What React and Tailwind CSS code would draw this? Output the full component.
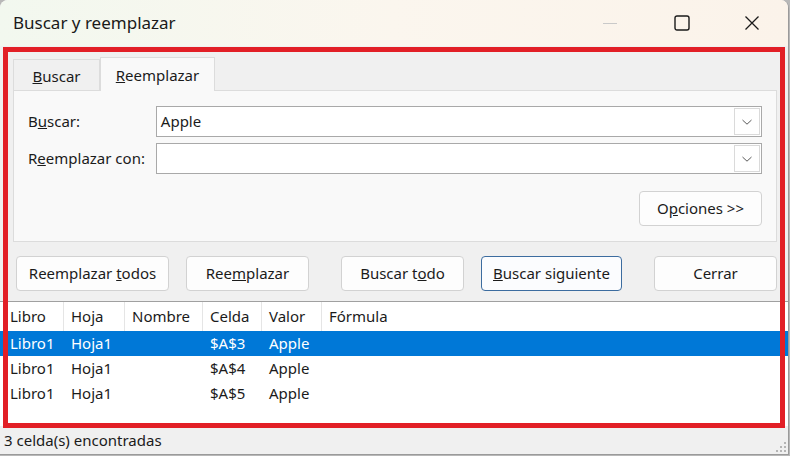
import React from "react";

/* ===========================================================
   BUSCAR Y REEMPLAZAR DIALOG
=========================================================== */
const rows = [
  { libro: "Libro1", hoja: "Hoja1", nombre: "", celda: "$A$3", valor: "Apple", selected: true },
  { libro: "Libro1", hoja: "Hoja1", nombre: "", celda: "$A$4", valor: "Apple" },
  { libro: "Libro1", hoja: "Hoja1", nombre: "", celda: "$A$5", valor: "Apple" },
];

export default function App() {
  return (
    <div
      className="w-[790px] h-[456px] bg-[#b8b8b8] text-[15px] text-[#1b1b1b] overflow-hidden"
      style={{ fontFamily: '"Segoe UI", "Noto Sans", sans-serif' }}
    >
      <div className="relative w-[789px] h-[455px] flex flex-col rounded-t-[8px] border-r border-b border-[#9a9a9a] overflow-hidden bg-[#f0f0f0]">

        {/* ---------------- Title bar ---------------- */}
        <div className="h-[46px] flex items-center bg-gradient-to-r from-[#f2f8ef] via-[#fbf6ee] to-[#fbf3ea]">
          <span className="pl-[13px] text-[17px] text-[#1a1a1a]">Buscar y reemplazar</span>
          <div className="ml-auto flex items-center h-full">
            <div className="w-[46px] flex justify-center">
              <div className="w-[14px] h-px bg-[#c9c9c9]" />
            </div>
            <div className="w-[70px] flex justify-center ml-[14px]">
              <svg width="16" height="16" viewBox="0 0 16 16">
                <rect x="1" y="1" width="14" height="14" rx="2" fill="none" stroke="#1a1a1a" strokeWidth="1.4" />
              </svg>
            </div>
            <div className="w-[70px] flex justify-center mr-[1px]">
              <svg width="16" height="16" viewBox="0 0 16 16">
                <path d="M1.5 1.5 L14.5 14.5 M14.5 1.5 L1.5 14.5" stroke="#1a1a1a" strokeWidth="1.3" />
              </svg>
            </div>
          </div>
        </div>

        {/* ---------------- Tabs ---------------- */}
        <div className="flex items-end pl-[13px] pt-[11px]">
          <div className="w-[87px] h-[31px] flex items-center justify-center border border-b-0 border-[#dcdcdc] bg-[#f0f0f0]">
            <span className="pt-[2px]"><u>B</u>uscar</span>
          </div>
          <div className="w-[115px] h-[34px] -mb-px relative z-10 flex items-center justify-center border border-b-0 border-[#dcdcdc] bg-[#f9f9f9]">
            <span className="pt-[2px]"><u>R</u>eemplazar</span>
          </div>
        </div>

        {/* ---------------- Panel ---------------- */}
        <div className="mx-[13px] w-[764px] h-[152px] border border-[#dcdcdc] bg-[#f9f9f9] pt-[15px] pl-[14px] pr-[14px] flex flex-col">
          <FieldRow label={<>B<u>u</u>scar:</>} value="Apple" />
          <div className="h-[6px]" />
          <FieldRow label={<>R<u>e</u>emplazar con:</>} value="" />
          <div className="flex justify-end mt-[17px]">
            <DialogButton className="w-[123px]">
              O<u>p</u>ciones &gt;&gt;
            </DialogButton>
          </div>
        </div>

        {/* ---------------- Buttons ---------------- */}
        <div className="flex items-center pl-[16px] mt-[14px]">
          <DialogButton className="w-[153px]">Reemplazar <u>t</u>odos</DialogButton>
          <DialogButton className="w-[123px] ml-[17px]">Ree<u>m</u>plazar</DialogButton>
          <DialogButton className="w-[123px] ml-[32px]">Buscar t<u>o</u>do</DialogButton>
          <DialogButton className="w-[141px] ml-[17px]" primary>
            <u>B</u>uscar siguiente
          </DialogButton>
          <DialogButton className="w-[123px] ml-[32px]">Cerrar</DialogButton>
        </div>

        {/* ---------------- Results list ---------------- */}
        <div className="mt-[10px] flex-1 bg-white border-t border-[#a0a0a0] flex flex-col">
          <div className="flex h-[29px] items-center">
            <HeadCell w="w-[64px]" first>Libro</HeadCell>
            <HeadCell w="w-[61px]">Hoja</HeadCell>
            <HeadCell w="w-[78px]">Nombre</HeadCell>
            <HeadCell w="w-[59px]">Celda</HeadCell>
            <HeadCell w="w-[60px]">Valor</HeadCell>
            <HeadCell w="w-[200px]" last>Fórmula</HeadCell>
          </div>
          {rows.map((r, i) => (
            <div
              key={i}
              className={
                r.selected
                  ? "flex h-[25px] items-center bg-[#0078d7] text-white"
                  : "flex h-[25px] items-center"
              }
            >
              <Cell w="w-[64px]" first>{r.libro}</Cell>
              <Cell w="w-[61px]">{r.hoja}</Cell>
              <Cell w="w-[78px]">{r.nombre}</Cell>
              <Cell w="w-[59px]">{r.celda}</Cell>
              <Cell w="w-[60px]">{r.valor}</Cell>
              <Cell w="flex-1"></Cell>
            </div>
          ))}
        </div>

        {/* ---------------- Status bar ---------------- */}
        <div className="h-[28px] flex items-center pl-[4px] bg-[#f0f0f0] relative">
          <span>3 celda(s) encontradas</span>
          <svg className="absolute right-[1px] bottom-[1px]" width="12" height="12" viewBox="0 0 12 12">
            <rect x="9" y="1" width="2" height="2" fill="#b5b5b5" />
            <rect x="5" y="5" width="2" height="2" fill="#b5b5b5" />
            <rect x="9" y="5" width="2" height="2" fill="#b5b5b5" />
            <rect x="1" y="9" width="2" height="2" fill="#b5b5b5" />
            <rect x="5" y="9" width="2" height="2" fill="#b5b5b5" />
            <rect x="9" y="9" width="2" height="2" fill="#b5b5b5" />
          </svg>
        </div>

        {/* ---------------- Red annotation frame ---------------- */}
        <div className="absolute left-[3px] top-[47px] w-[782px] h-[381px] border-[5px] border-[#e21f26] pointer-events-none" />
      </div>
    </div>
  );
}

/* ===========================================================
   REUSABLE COMPONENTS
=========================================================== */

function FieldRow({ label, value }) {
  return (
    <div className="flex items-center h-[31px]">
      <div className="w-[128px]">{label}</div>
      <div className="w-[607px] h-[31px] border border-[#a9a9a9] bg-white flex items-center relative">
        <span className="pl-[4px]">{value}</span>
        <div className="absolute right-[1px] top-[1px] w-[26px] h-[27px] border border-[#dadada] bg-white flex items-center justify-center">
          <svg width="12" height="8" viewBox="0 0 12 8">
            <path d="M1.5 2 L6 6.2 L10.5 2" fill="none" stroke="#5a5a5a" strokeWidth="1" />
          </svg>
        </div>
      </div>
    </div>
  );
}

function DialogButton({ children, className = "", primary }) {
  return (
    <button
      className={
        (primary
          ? "border-[#3c6c9f] bg-[#fbfcfe] "
          : "border-[#d2d2d2] bg-[#fdfdfd] ") +
        "h-[35px] rounded-[4px] border flex items-center justify-center text-[#1b1b1b] " +
        className
      }
    >
      <span>{children}</span>
    </button>
  );
}

function HeadCell({ children, w, first, last }) {
  return (
    <div
      className={
        w +
        " h-full flex items-center " +
        (first ? "pl-[10px] " : "pl-[7px] ") +
        (last ? "" : "border-r border-[#e5e5e5]")
      }
    >
      {children}
    </div>
  );
}

function Cell({ children, w, first }) {
  return (
    <div className={w + " h-full flex items-center " + (first ? "pl-[10px]" : "pl-[7px]")}>
      {children}
    </div>
  );
}
